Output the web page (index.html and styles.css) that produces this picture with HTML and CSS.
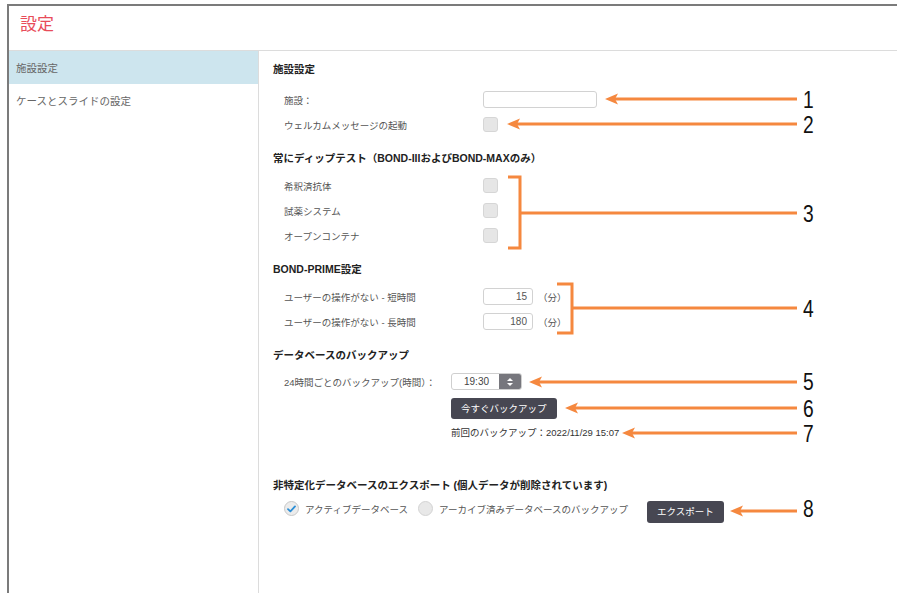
FILE: index.html
```html
<!DOCTYPE html>
<html lang="ja">
<head>
<meta charset="utf-8">
<title>設定</title>
<link rel="stylesheet" href="styles.css">
</head>
<body>
<div class="window">
  <header class="header"><h1 class="title">設定</h1></header>
  <div class="main">
    <nav class="sidebar">
      <div class="nav-item active">施設設定</div>
      <div class="nav-item">ケースとスライドの設定</div>
    </nav>
    <section class="content">
      <div class="section s-facility">
        <h2 class="sec-title">施設設定</h2>
        <div class="rows">
          <div class="row"><span class="label">施設：</span><span class="textbox wide"></span></div>
          <div class="row"><span class="label">ウェルカムメッセージの起動</span><span class="check"></span></div>
        </div>
      </div>
      <div class="section">
        <h2 class="sec-title">常にディップテスト（BOND-IIIおよびBOND-MAXのみ）</h2>
        <div class="rows">
          <div class="row"><span class="label">希釈済抗体</span><span class="check"></span></div>
          <div class="row"><span class="label">試薬システム</span><span class="check"></span></div>
          <div class="row"><span class="label">オープンコンテナ</span><span class="check"></span></div>
        </div>
      </div>
      <div class="section">
        <h2 class="sec-title">BOND-PRIME設定</h2>
        <div class="rows">
          <div class="row"><span class="label">ユーザーの操作がない - 短時間</span><span class="textbox num">15</span><span class="unit">（分）</span></div>
          <div class="row"><span class="label">ユーザーの操作がない - 長時間</span><span class="textbox num">180</span><span class="unit">（分）</span></div>
        </div>
      </div>
      <div class="section s-backup">
        <h2 class="sec-title">データベースのバックアップ</h2>
        <div class="rows">
          <div class="row"><span class="label short">24時間ごとのバックアップ(時間）：</span>
            <span class="timebox"><span class="time-val">19:30</span><span class="spin"><i class="up"></i><i class="down"></i></span></span>
          </div>
          <div class="btn-line"><span class="btn">今すぐバックアップ</span></div>
          <div class="last">前回のバックアップ：2022/11/29 15:07</div>
        </div>
      </div>
      <div class="section s-export">
        <h2 class="sec-title">非特定化データベースのエクスポート (個人データが削除されています)</h2>
        <div class="rows">
          <div class="row export-row">
            <span class="radio checked"><svg width="9" height="8" viewBox="0 0 9 8"><path d="M1 4.2 L3.4 6.4 L8 1.4" fill="none" stroke="#2d8fd6" stroke-width="1.8" stroke-linecap="round" stroke-linejoin="round"/></svg></span>
            <span class="radio-label">アクティブデータベース</span>
            <span class="radio"></span>
            <span class="radio-label">アーカイブ済みデータベースのバックアップ</span>
            <span class="btn export-btn">エクスポート</span>
          </div>
        </div>
      </div>
    </section>
  </div>
</div>

<svg class="overlay" width="897" height="593" viewBox="0 0 897 593">
  <g class="ann-line">
    <line x1="614" y1="99" x2="797" y2="99"/>
    <line x1="516" y1="124" x2="797" y2="124"/>
    <polyline points="508,177 520,177 520,248 508,248"/>
    <line x1="520" y1="213" x2="797" y2="213"/>
    <polyline points="557,284 572,284 572,333 557,333"/>
    <line x1="572" y1="308" x2="797" y2="308"/>
    <line x1="538" y1="382" x2="797" y2="382"/>
    <line x1="574" y1="408" x2="797" y2="408"/>
    <line x1="631" y1="433" x2="797" y2="433"/>
    <line x1="739" y1="511" x2="797" y2="511"/>
  </g>
  <g class="ann-head">
    <polygon points="605,99 618,93.5 615,99 618,104.5"/>
    <polygon points="507,124 520,118.5 517,124 520,129.5"/>
    <polygon points="529,382 542,376.5 539,382 542,387.5"/>
    <polygon points="565,408 578,402.5 575,408 578,413.5"/>
    <polygon points="622,433 635,427.5 632,433 635,438.5"/>
    <polygon points="730,511 743,505.5 740,511 743,516.5"/>
  </g>
  <g class="ann-num">
    <text transform="translate(803 107.5) scale(0.8 1)">1</text>
    <text transform="translate(803 132.5) scale(0.8 1)">2</text>
    <text transform="translate(803 222) scale(0.8 1)">3</text>
    <text transform="translate(803 316.5) scale(0.8 1)">4</text>
    <text transform="translate(803 390) scale(0.8 1)">5</text>
    <text transform="translate(803 416.5) scale(0.8 1)">6</text>
    <text transform="translate(803 442) scale(0.8 1)">7</text>
    <text transform="translate(803 516.5) scale(0.8 1)">8</text>
  </g>
</svg>
</body>
</html>
```

FILE: styles.css
```css
* { box-sizing: border-box; margin: 0; padding: 0; }

html, body {
  width: 897px;
  height: 593px;
  overflow: hidden;
}

body {
  position: relative;
  background: #fff;
  font-family: "Liberation Sans", "Noto Sans CJK JP", sans-serif;
  color: #555;
}

.window {
  margin: 4px 0 0 7px;
  height: 589px;
  border-top: 2px solid #7b7b7b;
  border-left: 2px solid #7b7b7b;
  display: flex;
  flex-direction: column;
}

.header {
  height: 45px;
  flex: none;
  border-bottom: 1px solid #dcdcdc;
  padding: 7px 0 0 11px;
}

.title {
  font-size: 17px;
  font-weight: normal;
  line-height: 24px;
  color: #e84c5a;
}

.main {
  flex: 1;
  display: flex;
}

.sidebar {
  width: 250px;
  flex: none;
  border-right: 1px solid #dcdcdc;
}

.nav-item {
  height: 33px;
  line-height: 34px;
  padding-left: 7px;
  font-size: 10.5px;
  color: #666;
}

.nav-item.active { background: #cde5ee; }

.content {
  flex: 1;
  padding: 8px 0 0 14px;
}

.sec-title {
  height: 20px;
  line-height: 20px;
  font-size: 10.5px;
  font-weight: bold;
  color: #222;
}

.section + .section { margin-top: 11px; }

.rows {
  padding-left: 11px;
  margin-top: 5px;
}

.s-facility .rows { margin-top: 8px; }
.s-backup .rows { margin-top: 4px; }
.section.s-export { margin-top: 35px; }
.s-export .rows { margin-top: 1px; }

.row {
  height: 25px;
  display: flex;
  align-items: center;
}

.label {
  width: 199px;
  flex: none;
  font-size: 9.5px;
  color: #555;
}

.label.short { width: 167px; }

.textbox {
  height: 17px;
  border: 1px solid #d2d2d2;
  border-radius: 3px;
  background: #fff;
}

.textbox.wide { width: 114px; }

.textbox.num {
  width: 50px;
  text-align: right;
  padding-right: 5px;
  font-size: 10px;
  line-height: 15px;
  color: #555;
}

.unit {
  margin-left: 5px;
  font-size: 9.5px;
  color: #555;
}

.check {
  width: 15px;
  height: 15px;
  background: #e6e6e6;
  border: 1px solid #d6d6d6;
  border-radius: 3px;
}

.timebox {
  width: 71px;
  height: 17px;
  display: flex;
  border: 1px solid #cfcfcf;
  border-radius: 3px;
  overflow: hidden;
}

.time-val {
  flex: 1;
  text-align: center;
  padding-left: 2px;
  font-size: 10px;
  line-height: 15px;
  color: #444;
}

.spin {
  width: 22px;
  background: #77777d;
  display: flex;
  flex-direction: column;
  align-items: center;
  justify-content: center;
  gap: 2px;
}

.spin i {
  display: block;
  width: 0;
  height: 0;
  border-left: 3px solid transparent;
  border-right: 3px solid transparent;
}

.spin .up { border-bottom: 3px solid #fff; }
.spin .down { border-top: 3px solid #fff; }

.btn-line {
  margin: 4px 0 0 167px;
  height: 21px;
}

.btn {
  display: inline-block;
  height: 21px;
  line-height: 21px;
  padding: 0 10px;
  background: #474752;
  color: #fff;
  border-radius: 3px;
  font-size: 9.5px;
}

.last {
  margin: 7px 0 0 167px;
  font-size: 9.5px;
  line-height: 14px;
  color: #333;
}

.radio {
  width: 15px;
  height: 15px;
  flex: none;
  border-radius: 50%;
  background: #e8e8e8;
  border: 1px solid #d3d3d3;
  display: flex;
  align-items: center;
  justify-content: center;
}

.radio.checked { background: #ececec; border-color: #c8c8c8; }

.radio-label {
  font-size: 9.5px;
  color: #555;
  margin: 0 10px 0 6px;
}

.export-btn {
  height: 22px;
  line-height: 22px;
  padding: 0 10px;
  margin: 5px 0 0 9px;
  align-self: flex-start;
}

.overlay {
  position: absolute;
  left: 0;
  top: 0;
  pointer-events: none;
}

.ann-line line,
.ann-line polyline {
  stroke: #f5883f;
  stroke-width: 3;
  fill: none;
  stroke-linejoin: miter;
}

.ann-head polygon { fill: #f5883f; }

.ann-num text {
  font-family: "Liberation Sans", sans-serif;
  font-size: 24px;
  fill: #111;
}
```
